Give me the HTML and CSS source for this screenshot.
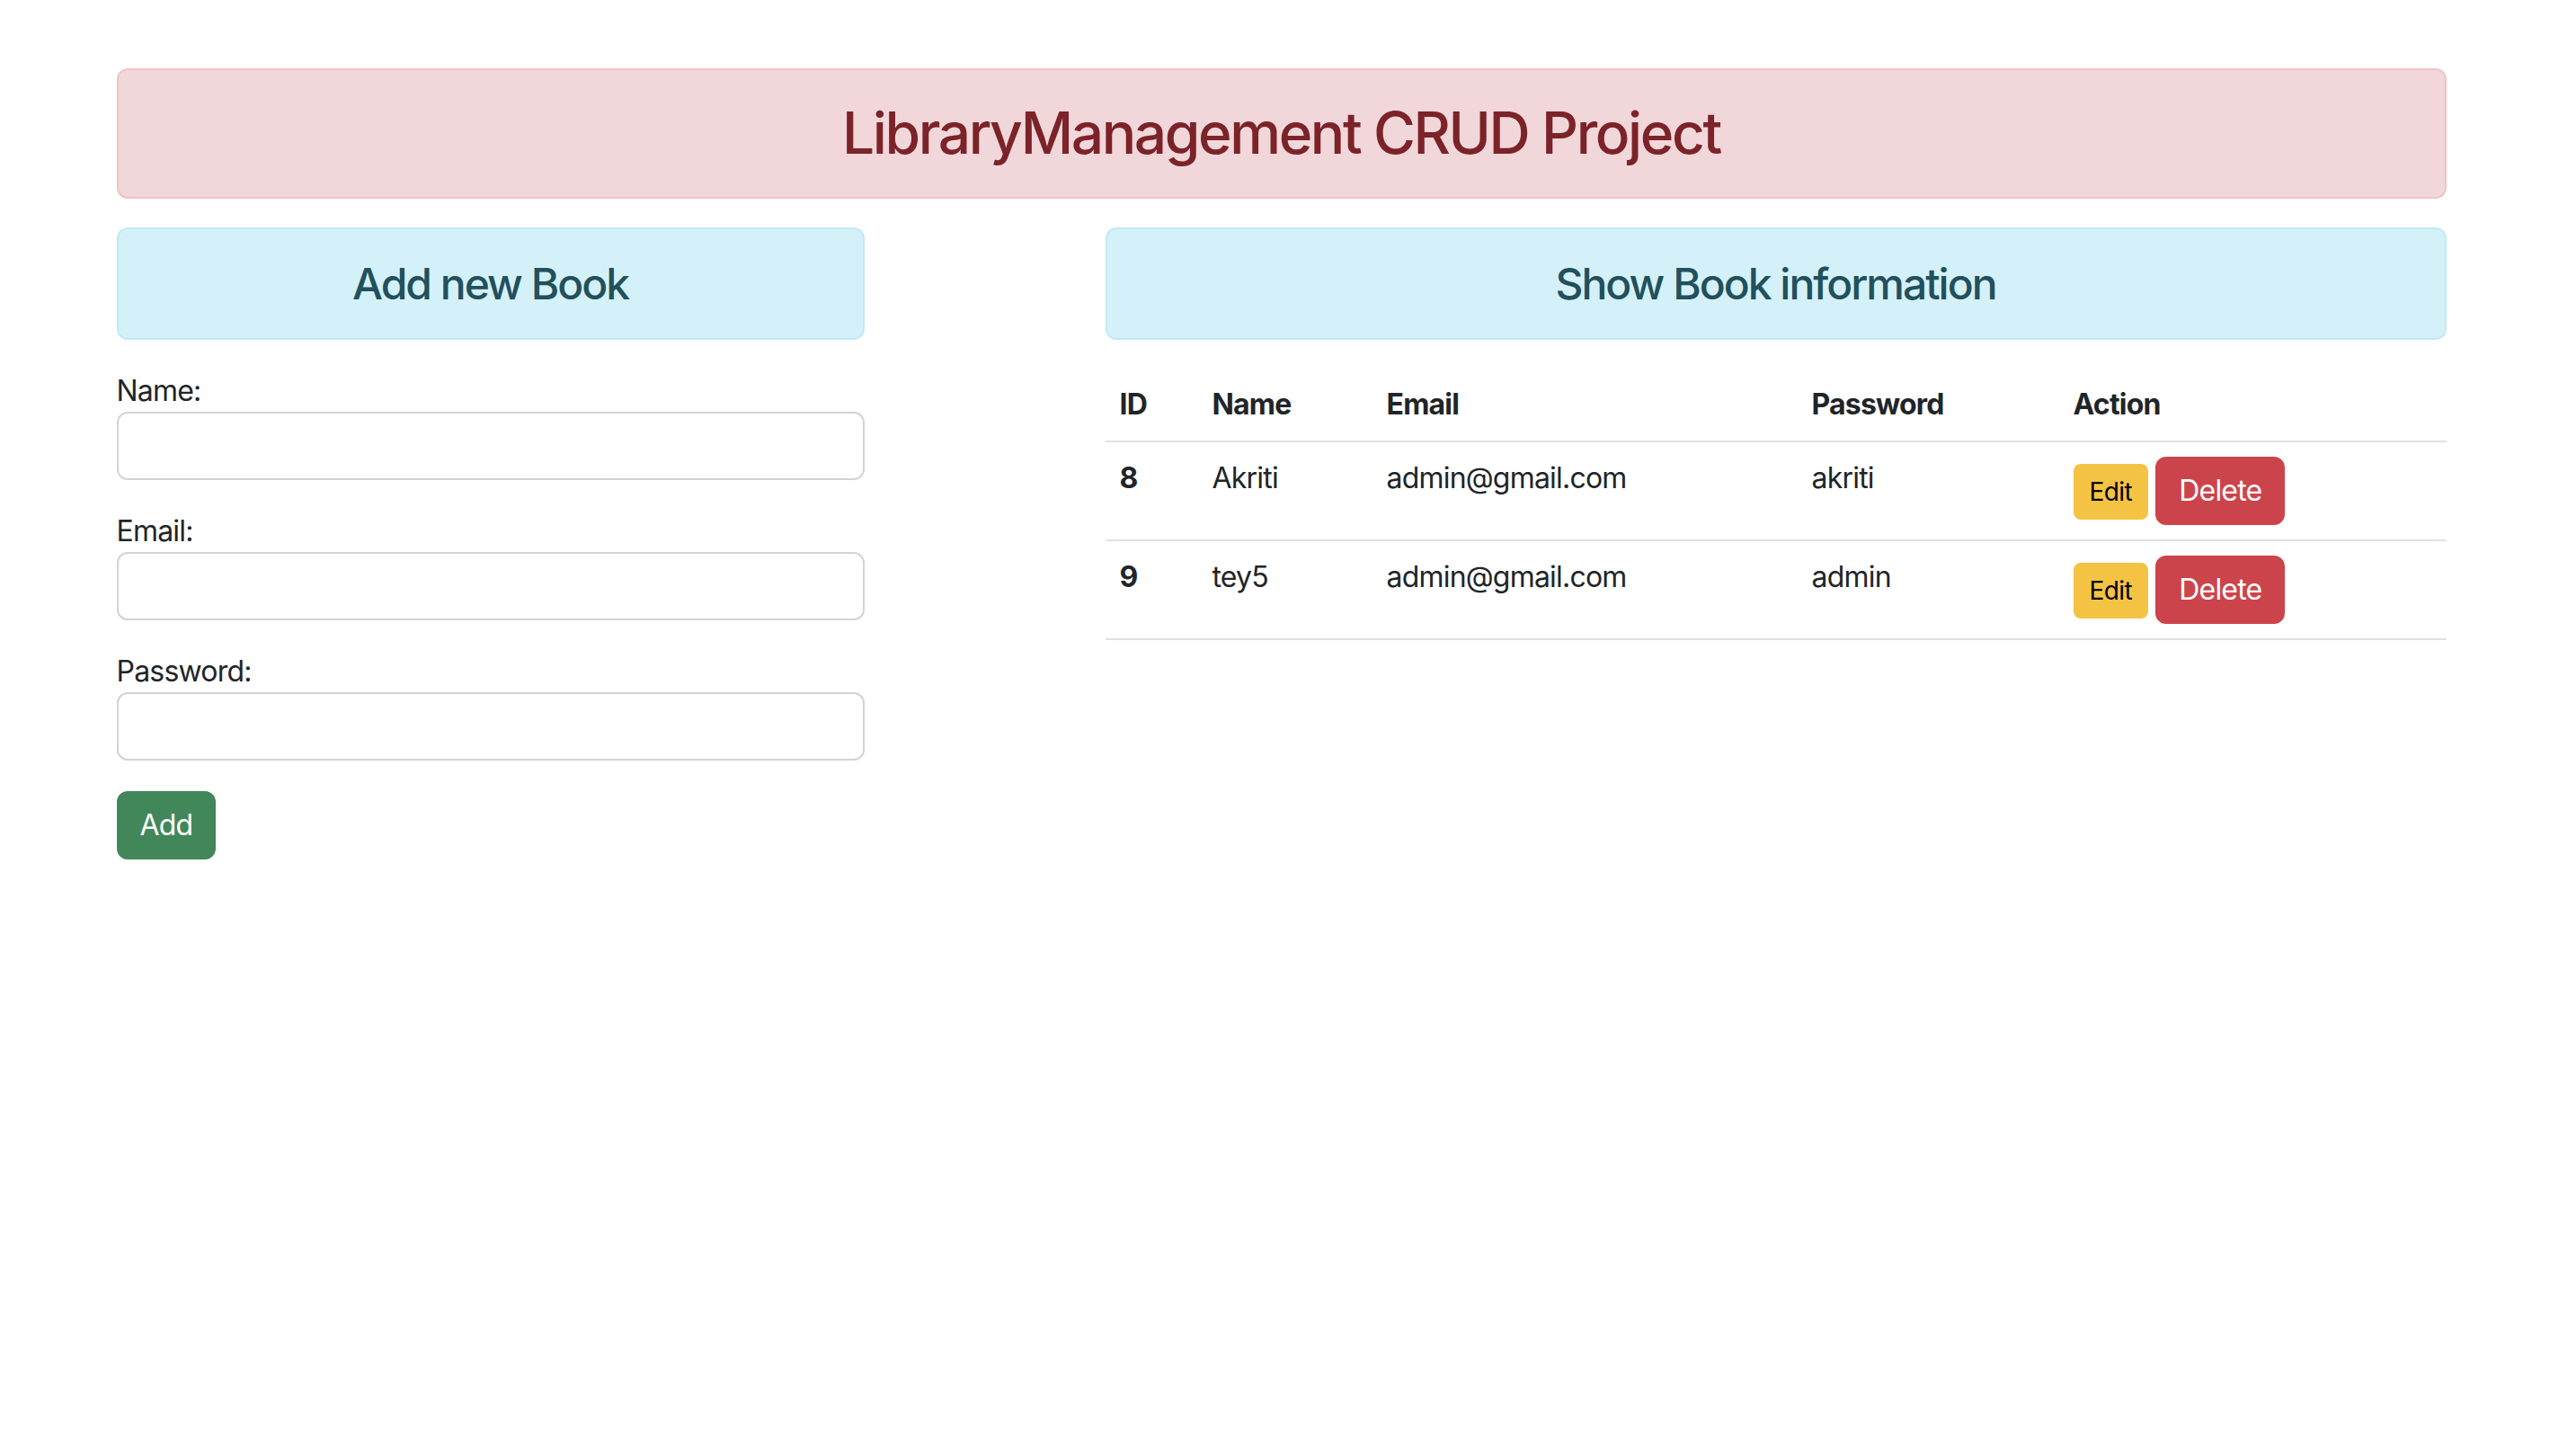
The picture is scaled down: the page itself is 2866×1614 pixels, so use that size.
FILE: index.html
```html
<!DOCTYPE html>
<html lang="en">
<head>
<meta charset="utf-8">
<title>LibraryManagement CRUD Project</title>
<link rel="stylesheet" href="styles.css">
</head>
<body>
<div class="container">
  <div class="alert alert-danger">
    <h2 class="title">LibraryManagement CRUD Project</h2>
  </div>
  <div class="row">
    <div class="col-left">
      <div class="alert alert-info">
        <h4 class="section-title">Add new Book</h4>
      </div>
      <form class="book-form">
        <div class="form-group">
          <label for="name">Name:</label>
          <input type="text" id="name" class="form-control">
        </div>
        <div class="form-group">
          <label for="email">Email:</label>
          <input type="email" id="email" class="form-control">
        </div>
        <div class="form-group">
          <label for="password">Password:</label>
          <input type="password" id="password" class="form-control">
        </div>
        <button type="button" class="btn btn-success">Add</button>
      </form>
    </div>
    <div class="col-right">
      <div class="alert alert-info">
        <h4 class="section-title">Show Book information</h4>
      </div>
      <table class="table">
        <colgroup>
          <col class="c-id">
          <col class="c-name">
          <col class="c-email">
          <col class="c-pass">
          <col class="c-action">
        </colgroup>
        <thead>
          <tr>
            <th>ID</th>
            <th>Name</th>
            <th>Email</th>
            <th>Password</th>
            <th>Action</th>
          </tr>
        </thead>
        <tbody>
          <tr>
            <th>8</th>
            <td>Akriti</td>
            <td>admin@gmail.com</td>
            <td>akriti</td>
            <td><button type="button" class="btn btn-sm btn-warning">Edit</button> <button type="button" class="btn btn-danger">Delete</button></td>
          </tr>
          <tr>
            <th>9</th>
            <td>tey5</td>
            <td>admin@gmail.com</td>
            <td>admin</td>
            <td><button type="button" class="btn btn-sm btn-warning">Edit</button> <button type="button" class="btn btn-danger">Delete</button></td>
          </tr>
        </tbody>
      </table>
    </div>
  </div>
</div>
</body>
</html>
```

FILE: styles.css
```css
* {
  box-sizing: border-box;
}

html, body {
  margin: 0;
  background: #ffffff;
}

body {
  padding: 0 15px 0 0;
  font-family: Inter, "Noto Sans", "Liberation Sans", sans-serif;
  font-size: 32px;
  line-height: 1.5;
  letter-spacing: -0.8px;
  color: #212529;
}

.container {
  width: 2592px;
  margin: 0 auto;
  padding-top: 76px;
}

.alert {
  border: 2px solid transparent;
  border-radius: 12px;
  padding: 32px;
  margin-bottom: 32px;
  text-align: center;
}

.alert-danger {
  background: #f2d7da;
  border-color: #efc4c8;
}

.alert-info {
  background: #d4f1f9;
  border-color: #c0eaf6;
}

.title {
  margin: 0;
  font-size: 64px;
  font-weight: 500;
  line-height: 1.2;
  letter-spacing: -2.4px;
  color: #7b2329;
}

.section-title {
  margin: 0;
  font-size: 48px;
  font-weight: 500;
  line-height: 1.2;
  letter-spacing: -2px;
  color: #22505c;
}

.row {
  display: flex;
  gap: 268px;
  align-items: flex-start;
}

.col-left {
  width: 832px;
  flex: none;
}

.col-right {
  width: 1492px;
  flex: none;
}

.form-group {
  margin-bottom: 32px;
}

.form-group label {
  display: block;
  line-height: 48px;
  padding-top: 1px;
  margin-bottom: -1px;
}

.form-control {
  display: block;
  width: 100%;
  height: 76px;
  padding: 12px 24px;
  font: inherit;
  border: 2px solid #d0d4d9;
  border-radius: 12px;
  background: #fff;
  color: #212529;
}

.book-form .btn-success {
  margin-top: 2px;
}

.btn {
  display: inline-block;
  font-family: inherit;
  font-size: 32px;
  font-weight: 400;
  line-height: 48px;
  letter-spacing: -0.8px;
  padding: 12px 24px;
  border: 2px solid transparent;
  border-radius: 12px;
  vertical-align: baseline;
  cursor: pointer;
}

.btn-sm {
  font-size: 28px;
  line-height: 42px;
  letter-spacing: -0.6px;
  padding: 8px 16px;
  border-radius: 8px;
}

.btn-success {
  background: #42875a;
  border-color: #42875a;
  color: #ffffff;
}

.btn-warning {
  background: #f5c344;
  border-color: #f5c344;
  color: #000000;
}

.btn-danger {
  background: #cc444b;
  border-color: #cc444b;
  color: #ffffff;
}

.table {
  width: 100%;
  border-collapse: collapse;
  table-layout: fixed;
  vertical-align: top;
}

.table th,
.table td {
  padding: 16px;
  text-align: left;
  vertical-align: top;
  border-bottom: 2px solid #dee2e6;
}

.table th {
  font-weight: 700;
}

.c-id { width: 103px; }
.c-name { width: 194px; }
.c-email { width: 473px; }
.c-pass { width: 291px; }
.c-action { width: 431px; }
```
